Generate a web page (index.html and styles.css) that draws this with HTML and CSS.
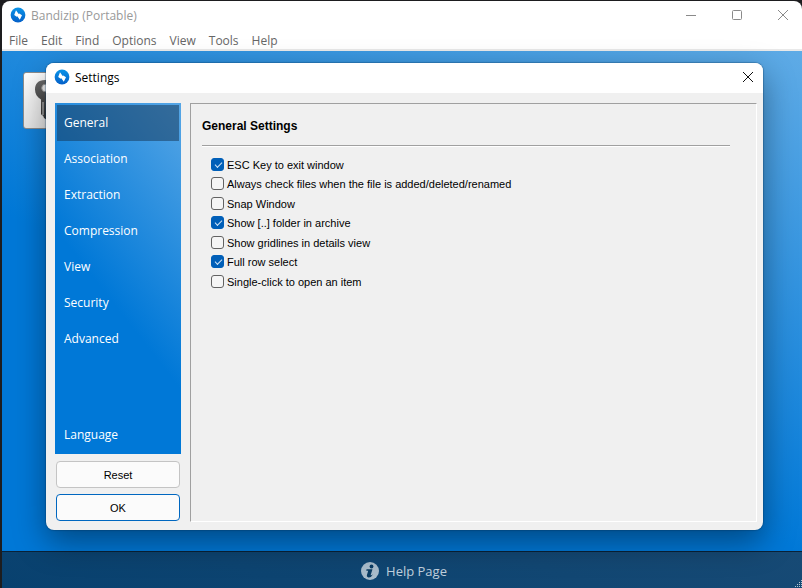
FILE: index.html
```html
<!DOCTYPE html>
<html lang="en">

<head>
    <meta charset="UTF-8">
    <meta name="viewport" content="width=device-width, initial-scale=1.0">
    <title>Bandizip (Portable)</title>
    <link rel="stylesheet" href="styles.css">
</head>

<body>
    <svg width="0" height="0" class="defs" aria-hidden="true">
        <defs>
            <linearGradient id="logoFill" x1="0" y1="0" x2="0" y2="1">
                <stop offset="0" stop-color="#0a94e8" />
                <stop offset="1" stop-color="#0560c8" />
            </linearGradient>
            <linearGradient id="keyFill" x1="0" y1="0" x2="0" y2="1">
                <stop offset="0" stop-color="#6a6a6a" />
                <stop offset="1" stop-color="#303030" />
            </linearGradient>
            <symbol id="logo" viewBox="0 0 16 16">
                <circle cx="8" cy="8" r="7.4" fill="url(#logoFill)" />
                <path d="M6 3.200 8.700 7 9.300 6.500 12 8.200 9.800 12.800 7.300 9.200 6.700 9.700 4.200 8Z" fill="#fff" />
            </symbol>
        </defs>
    </svg>

    <div class="window">
        <header class="titlebar">
            <svg class="logo"><use href="#logo" /></svg>
            <h1 class="app-name">Bandizip (Portable)</h1>
            <button class="window-button" aria-label="Minimize">
                <svg viewBox="0 0 10 10"><path d="M0 5.5H10" /></svg>
            </button>
            <button class="window-button" aria-label="Maximize">
                <svg viewBox="0 0 10 10"><rect x="0.5" y="0.5" width="9" height="9" rx="1" /></svg>
            </button>
            <button class="window-button" aria-label="Close">
                <svg viewBox="0 0 10 10"><path d="M0 0 10 10M10 0 0 10" /></svg>
            </button>
        </header>

        <nav class="menubar">
            <a href="#">File</a>
            <a href="#">Edit</a>
            <a href="#">Find</a>
            <a href="#">Options</a>
            <a href="#">View</a>
            <a href="#">Tools</a>
            <a href="#">Help</a>
        </nav>

        <main class="workspace">
            <div class="tile">
                <svg width="32" height="44" viewBox="0 0 32 44">
                    <path d="M10 0C3 0 0 4 0 9.500 0 14 2 17 6 19.500V34L7.500 36V34L9 38 12 40 14 37V19.500C18 17 20 14 20 9.500 20 4 17 0 10 0Z" fill="url(#keyFill)" />
                    <path d="M8 22V35" stroke="#ddd" />
                    <circle cx="10.500" cy="8" r="3.800" fill="#f0f0f0" stroke="#999" />
                </svg>
            </div>

            <section class="dialog" role="dialog" aria-labelledby="dialogTitle">
                <header class="dialog-header">
                    <svg class="logo"><use href="#logo" /></svg>
                    <h2 class="dialog-title" id="dialogTitle">Settings</h2>
                    <button class="dialog-close" aria-label="Close">
                        <svg viewBox="0 0 10 10"><path d="M0 0 10 10M10 0 0 10" /></svg>
                    </button>
                </header>

                <div class="dialog-body">
                    <div class="sidebar">
                        <nav class="tabs">
                            <a href="#" class="tab active">General</a>
                            <a href="#" class="tab">Association</a>
                            <a href="#" class="tab">Extraction</a>
                            <a href="#" class="tab">Compression</a>
                            <a href="#" class="tab">View</a>
                            <a href="#" class="tab">Security</a>
                            <a href="#" class="tab">Advanced</a>
                            <a href="#" class="tab last">Language</a>
                        </nav>
                        <button class="btn">Reset</button>
                        <button class="btn primary">OK</button>
                    </div>

                    <form class="panel">
                        <h3 class="panel-title">General Settings</h3>
                        <div class="options">
                            <label><input type="checkbox" checked>ESC Key to exit window</label>
                            <label><input type="checkbox">Always check files when the file is added/deleted/renamed</label>
                            <label><input type="checkbox">Snap Window</label>
                            <label><input type="checkbox" checked>Show [..] folder in archive</label>
                            <label><input type="checkbox">Show gridlines in details view</label>
                            <label><input type="checkbox" checked>Full row select</label>
                            <label><input type="checkbox">Single-click to open an item</label>
                        </div>
                    </form>
                </div>
            </section>
        </main>

        <footer class="footer">
            <a href="#" class="help">
                <svg width="18" height="18" viewBox="0 0 18 18">
                    <circle cx="9" cy="9" r="9" fill="#a9bccb" />
                    <circle cx="10.500" cy="4.500" r="1.900" fill="#0b3c63" />
                    <path d="M5.500 7.300H11.500L9.700 13Q10 13.600 12 12.300 10.300 15.700 7.500 15.500 5.300 15 6 12.800L7.200 8.700H5.300Z" fill="#0b3c63" />
                </svg>
                Help Page
            </a>
        </footer>
        <svg class="grip" viewBox="0 0 9 9"><path d="M8 1.500h1M6 3.500h3M4 5.500h5M2 7.500h7" /></svg>
    </div>
</body>

</html>
```
FILE: styles.css
```css
* {
    padding: 0;
    margin: 0;
    box-sizing: border-box;
}

body {
    background-color: #1d1d1f;
    font-family: "Open Sans", "Noto Sans", sans-serif;
    font-size: 12px;
    padding: 1px 0 0 2px;
}

a {
    color: inherit;
    text-decoration: none;
}

button {
    border: none;
    background: none;
    font: inherit;
}

.defs {
    position: absolute;
}

.window {
    position: relative;
    display: flex;
    flex-direction: column;
    min-height: calc(100vh - 1px);
    border-radius: 8px 8px 0 0;
    background-color: #fff;
    overflow: hidden;
}

.logo {
    width: 16px;
    height: 16px;
}

.titlebar {
    display: flex;
    align-items: center;
    height: 28px;
    margin-right: -4px;
    padding-left: 8px;
    color: #999;
}

.app-name {
    flex: 1;
    margin-left: 5px;
    font-size: 12px;
    font-weight: 400;
}

.window-button {
    width: 46px;
    height: 28px;
}

.window-button svg,
.dialog-close svg {
    display: block;
    width: 10px;
    height: 10px;
    margin: auto;
    overflow: visible;
    fill: none;
    stroke: #8a8a8a;
}

.menubar {
    display: flex;
    gap: 13px;
    height: 22px;
    padding-left: 7px;
    border-bottom: 2px solid #e9e9e9;
    color: #666;
    line-height: 24px;
}

.workspace {
    position: relative;
    flex: 1;
    padding: 21px;
    background: linear-gradient(23deg, #0078d7 40%, #5fabe6 100%);
}

.tile {
    width: 58px;
    height: 57px;
    padding: 7px 11px;
    border: 1px solid #8d8d8d;
    border-radius: 3px;
    background: linear-gradient(#fff, #e6e6e6);
}

.dialog {
    position: absolute;
    inset: 12px 39px 21px 44px;
    display: flex;
    flex-direction: column;
    border-radius: 8px;
    background-color: #f0f0f0;
    box-shadow: 0 0 1px 1px rgba(0, 50, 90, 0.3), 0 12px 32px rgba(0, 0, 0, 0.4);
    overflow: hidden;
}

.dialog-header {
    display: flex;
    align-items: center;
    height: 30px;
    padding: 0 10px 2px 8px;
    background-color: #fff;
}

.dialog-title {
    flex: 1;
    margin-left: 5px;
    font-size: 12px;
    font-weight: 400;
}

.dialog-close svg {
    stroke: #111;
}

.dialog-body {
    display: flex;
    flex: 1;
    gap: 9px;
    padding: 10px 6px 8px 9px;
}

.sidebar {
    display: flex;
    flex-direction: column;
    gap: 6px;
    width: 126px;
    padding-bottom: 1px;
}

.tabs {
    display: flex;
    flex: 1;
    flex-direction: column;
    margin-bottom: 1px;
    padding: 2px 2px 1px;
    background: linear-gradient(52deg, #0078d7 44%, #56a6e6 100%);
    color: #fff;
}

.tab {
    height: 36px;
    padding-left: 7px;
    line-height: 36px;
}

.tab.active {
    background-color: rgba(20, 50, 80, 0.5);
}

.tab.last {
    margin-top: auto;
}

.btn {
    height: 27px;
    margin: 0 1px;
    border: 1px solid #c4c4c4;
    border-radius: 4px;
    background-color: #fbfbfb;
    font-family: "Liberation Sans", Arial, sans-serif;
    font-size: 11px;
}

.btn.primary {
    border-color: #0067c0;
}

.panel {
    flex: 1;
    padding: 12px 26px 12px 11px;
    border: 1px solid;
    border-color: #a0a0a0 #fff #fff #a0a0a0;
    font-family: "Liberation Sans", Arial, sans-serif;
    font-size: 11px;
}

.panel-title {
    padding-bottom: 9px;
    border-bottom: 1px solid #a0a0a0;
    box-shadow: 0 1px #fff;
    font-size: 12px;
    line-height: 20px;
}

.options {
    display: flex;
    flex-direction: column;
    align-items: flex-start;
    padding: 9px;
}

.options label {
    display: flex;
    align-items: center;
    gap: 3px;
    height: 19px;
}

.options label:nth-child(even) {
    margin-bottom: 1px;
}

.options input {
    appearance: none;
    width: 13px;
    height: 13px;
    border: 1px solid #626262;
    border-radius: 3px;
    background-color: #f5f5f5;
}

.options input:checked {
    border-color: #005fb8;
    background-color: #005fb8;
}

.options input:checked::before {
    content: "";
    display: block;
    width: 6px;
    height: 3px;
    margin: 3px;
    border-left: 1px solid #cfe4f7;
    border-bottom: 1px solid #cfe4f7;
    transform: rotate(-45deg);
}

.footer {
    display: flex;
    align-items: center;
    justify-content: center;
    height: 37px;
    padding: 2px 0 0 4px;
    border-top: 1px solid #0a2238;
    background: linear-gradient(20deg, #08416f, #174a75);
}

.help {
    display: flex;
    align-items: center;
    gap: 7px;
    color: #c0d0dd;
    font-size: 13px;
}

.grip {
    position: absolute;
    right: 0;
    bottom: 0;
    width: 9px;
    height: 9px;
    fill: none;
    stroke: #b5c4d0;
    stroke-dasharray: 1 1;
}
```
